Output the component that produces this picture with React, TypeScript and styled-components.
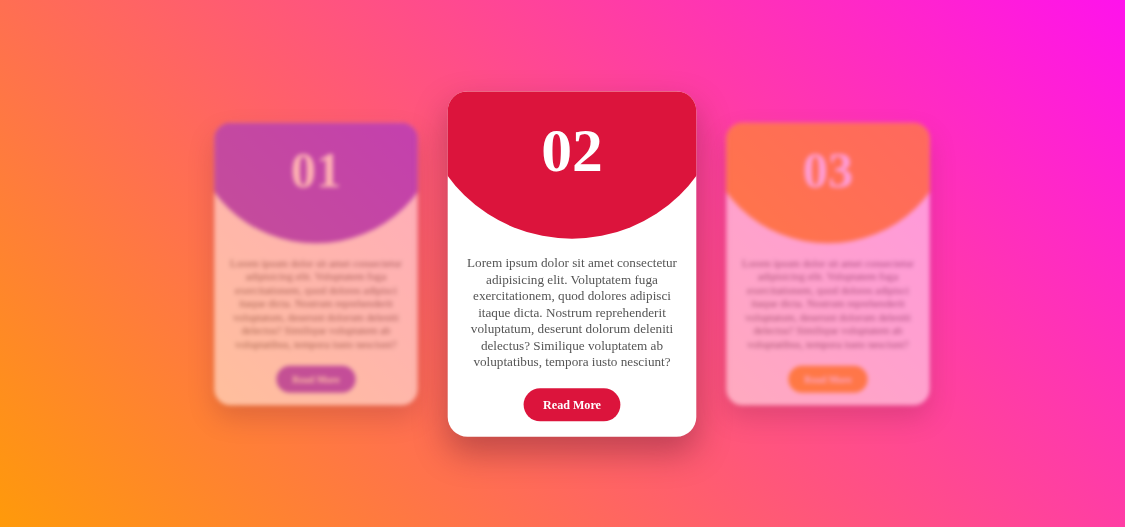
import React from "react";
import styled, { createGlobalStyle, css } from "styled-components";

const GlobalStyle = createGlobalStyle`
  * { box-sizing: border-box; }
  html, body { margin: 0; padding: 0; }
  body {
    font-family: "Liberation Serif", "Times New Roman", serif;
    background: linear-gradient(45deg, #ff9a0a 0%, #ff12ec 100%);
    min-height: 100vh;
  }
`;

const Stage = styled.main`
  height: 527px;
  display: flex;
  align-items: center;
  justify-content: center;
  gap: 30px;
  padding-left: 18px;
`;

const Card = styled.section<{ $active?: boolean }>`
  width: 226px;
  height: 314px;
  background: #fff;
  border-radius: 18px;
  overflow: hidden;
  display: flex;
  flex-direction: column;
  align-items: center;
  text-align: center;
  box-shadow: 0 14px 30px rgba(90, 20, 40, 0.38);
  ${(p) =>
    p.$active
      ? css`
          transform: scale(1.1);
        `
      : css`
          transform: scale(0.9);
          opacity: 0.5;
          filter: blur(2.2px);
        `}
`;

const Header = styled.header<{ $color: string }>`
  flex: none;
  width: 276px;
  height: 134px;
  background: ${(p) => p.$color};
  border-radius: 0 0 50% 50% / 0 0 100% 100%;
  padding-top: 21px;
  display: flex;
  justify-content: center;
`;

const Number = styled.h2`
  margin: 0;
  color: #fff;
  font-size: 56px;
  font-weight: 700;
  line-height: normal;
`;

const Text = styled.p`
  margin: 15px 0 0;
  padding: 0 15px;
  font-size: 12px;
  line-height: 15px;
  color: #555;
`;

const Button = styled.button<{ $color: string }>`
  margin-top: 16px;
  border: none;
  background: ${(p) => p.$color};
  color: #fff;
  font-family: "Liberation Serif", "Times New Roman", serif;
  font-weight: 700;
  font-size: 11px;
  line-height: 13px;
  height: 30px;
  padding: 0 17.5px;
  border-radius: 15px;
  cursor: pointer;
`;

const LOREM =
  "Lorem ipsum dolor sit amet consectetur adipisicing elit. Voluptatem fuga exercitationem, quod dolores adipisci itaque dicta. Nostrum reprehenderit voluptatum, deserunt dolorum deleniti delectus? Similique voluptatem ab voluptatibus, tempora iusto nesciunt?";

const cards = [
  { num: "01", color: "#8a2be2", active: false },
  { num: "02", color: "#dc143c", active: true },
  { num: "03", color: "#ffa500", active: false },
];

export default function App() {
  return (
    <>
      <GlobalStyle />
      <Stage>
        {cards.map((c) => (
          <Card key={c.num} $active={c.active}>
            <Header $color={c.color}>
              <Number>{c.num}</Number>
            </Header>
            <Text>{LOREM}</Text>
            <Button $color={c.color}>Read More</Button>
          </Card>
        ))}
      </Stage>
    </>
  );
}
